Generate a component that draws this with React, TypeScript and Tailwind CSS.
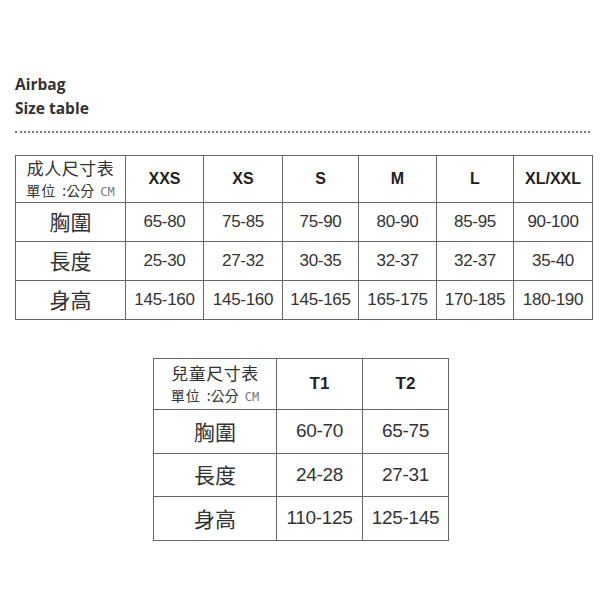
const adult = {
  sizes: ["XXS", "XS", "S", "M", "L", "XL/XXL"],
  widths: [78, 79, 76, 78, 77, 79],
  rows: [
    { label: "胸圍", values: ["65-80", "75-85", "75-90", "80-90", "85-95", "90-100"] },
    { label: "長度", values: ["25-30", "27-32", "30-35", "32-37", "32-37", "35-40"] },
    { label: "身高", values: ["145-160", "145-160", "145-165", "165-175", "170-185", "180-190"] },
  ],
};

const kids = {
  sizes: ["T1", "T2"],
  rows: [
    { label: "胸圍", values: ["60-70", "65-75"] },
    { label: "長度", values: ["24-28", "27-31"] },
    { label: "身高", values: ["110-125", "125-145"] },
  ],
};

const cjk = { fontFamily: '"Noto Sans CJK TC", "Noto Sans", sans-serif' };
const arial = { fontFamily: '"Liberation Sans", Arial, sans-serif' };

function Corner({ title }: { title: string }) {
  return (
    <div className="flex flex-col items-center text-[#333]" style={cjk}>
      <span className="text-[17px] leading-[24px] tracking-[0.5px]">{title}</span>
      <span className="flex items-baseline gap-[6px] text-[14px] leading-[20px]">
        <span className="tracking-[1px]">單位</span>
        <span>:公分</span>
        <span className="text-[12px] text-[#777]" style={{ fontFamily: '"DejaVu Sans Mono", monospace' }}>
          CM
        </span>
      </span>
    </div>
  );
}

export default function App() {
  return (
    <div className="w-[600px] h-[600px] bg-white pt-[72px] px-[15px]">
      <div className="text-[15.5px] leading-[24px] font-bold text-[#333]" style={{ fontFamily: '"Open Sans", sans-serif' }}>
        <p>Airbag</p>
        <p>Size table</p>
      </div>
      <div className="mt-[11px] mr-[-5px] border-t-2 border-dotted border-[#777]" />

      {/* adult table */}
      <table className="mt-[22px] w-[577px] table-fixed border-collapse text-[#333]" style={arial}>
        <colgroup>
          <col className="w-[110px]" />
          {adult.widths.map((w, i) => (
            <col key={i} style={{ width: w }} />
          ))}
        </colgroup>
        <thead>
          <tr className="h-[47px]">
            <th className="border border-[#666] p-0 font-normal">
              <Corner title="成人尺寸表" />
            </th>
            {adult.sizes.map((s) => (
              <th key={s} className="border border-[#666] p-0 text-[16px] font-bold text-[#222]">
                {s}
              </th>
            ))}
          </tr>
        </thead>
        <tbody>
          {adult.rows.map((r) => (
            <tr key={r.label} className="h-[39px]">
              <td className="border border-[#666] p-0 text-center text-[21px]" style={cjk}>
                {r.label}
              </td>
              {r.values.map((v, i) => (
                <td key={i} className="border border-[#666] p-0 text-center text-[17px] tracking-[-0.3px]">
                  {v}
                </td>
              ))}
            </tr>
          ))}
        </tbody>
      </table>

      {/* kids table */}
      <table className="mt-[38px] ml-[138px] w-[295px] table-fixed border-collapse text-[#333]" style={arial}>
        <colgroup>
          <col className="w-[123px]" />
          <col className="w-[86px]" />
          <col className="w-[86px]" />
        </colgroup>
        <thead>
          <tr className="h-[51px]">
            <th className="border border-[#666] p-0 font-normal">
              <Corner title="兒童尺寸表" />
            </th>
            {kids.sizes.map((s) => (
              <th key={s} className="border border-[#666] p-0 text-[17px] font-bold text-[#222]">
                {s}
              </th>
            ))}
          </tr>
        </thead>
        <tbody>
          {kids.rows.map((r, idx) => (
            <tr key={r.label} className={idx === 1 ? "h-[43px]" : "h-[44px]"}>
              <td className="border border-[#666] p-0 text-center text-[21px]" style={cjk}>
                {r.label}
              </td>
              {r.values.map((v, i) => (
                <td key={i} className="border border-[#666] p-0 text-center text-[19px] tracking-[-0.3px]">
                  {v}
                </td>
              ))}
            </tr>
          ))}
        </tbody>
      </table>
    </div>
  );
}
